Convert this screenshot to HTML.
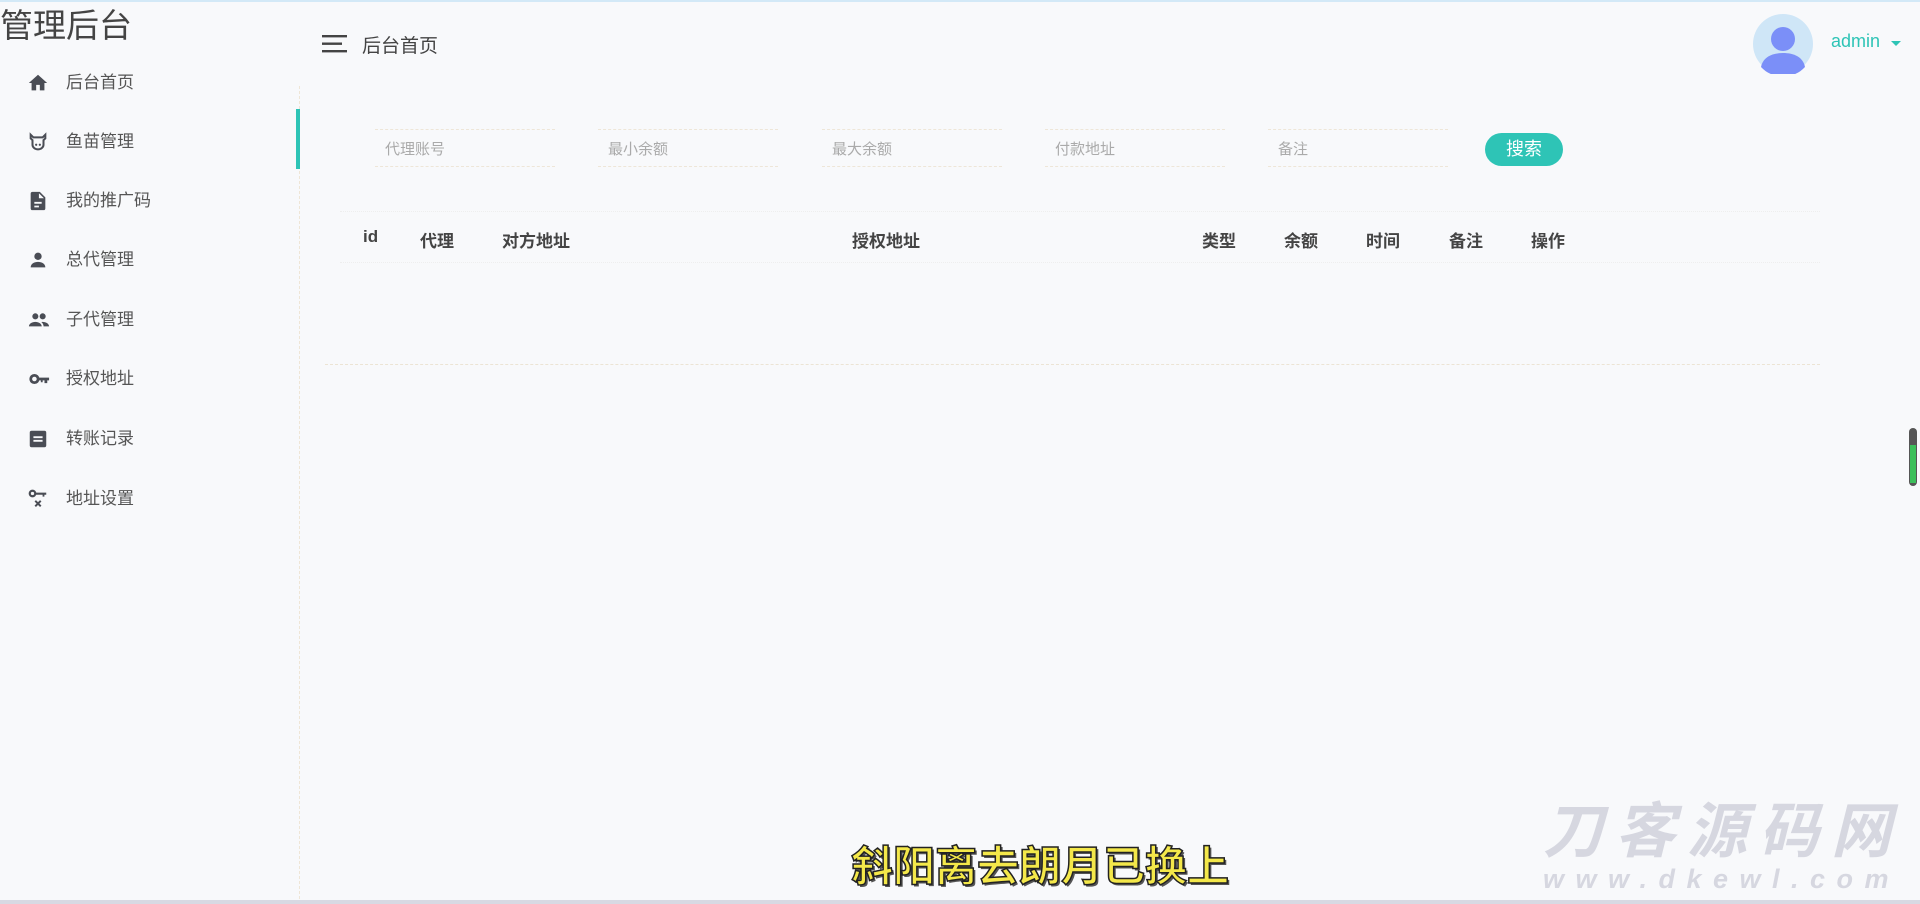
<!DOCTYPE html>
<html><head><meta charset="utf-8"><style>
*{margin:0;padding:0;box-sizing:border-box}
body{width:1920px;height:904px;background:#f8f9fb;font-family:"Liberation Sans","Noto Sans CJK SC",sans-serif;position:relative;overflow:hidden;color:#555}
.a{position:absolute;white-space:nowrap}
.top{left:0;top:0;width:1920px;height:2px;background:#d3e9f7}
.title{left:0;top:6px;font-size:33px;color:#444;line-height:40px}
.mi{left:0;height:30px;width:290px}
.mi svg{position:absolute;left:27px;top:4px}
.mi span{position:absolute;left:66px;top:3px;font-size:17px;color:#555;line-height:24px}
.vline{left:299px;top:86px;height:818px;border-left:1px dashed #efe6d6}
.bar{left:296px;top:109px;width:4px;height:60px;background:#2ec4b6}
.ph{font-size:15px;color:#aaa;top:138px}
.inp{top:129px;height:38px;width:180px;border-top:1px dashed #eee6d8;border-bottom:1px dashed #eee6d8}
.th{top:227px;font-size:17px;font-weight:bold;color:#444}
</style></head><body>
<div class="a top"></div>
<div class="a title">管理后台</div>
<div class="a vline"></div><div class="a bar"></div>

<div class="a mi" style="top:68px"><svg width="22" height="22" viewBox="0 0 24 24"><path d="M10 20v-6h4v6h5v-8h3L12 3 2 12h3v8z" fill="#4a4d55"/></svg><span>后台首页</span></div>
<div class="a mi" style="top:127px"><svg width="22" height="22" viewBox="0 0 24 24"><path d="M4 4l3 3h10l3-3v4l-2 2v5a6 5 0 0 1-12 0v-5l-2-2z" fill="none" stroke="#4a4d55" stroke-width="2.2"/><circle cx="10" cy="15" r="1.2" fill="#4a4d55"/><circle cx="14" cy="15" r="1.2" fill="#4a4d55"/></svg><span>鱼苗管理</span></div>
<div class="a mi" style="top:186px"><svg width="22" height="22" viewBox="0 0 24 24"><path d="M6 2h8l6 6v12a2 2 0 0 1-2 2H6a2 2 0 0 1-2-2V4a2 2 0 0 1 2-2zm7 1.5V9h5.5zM8 13v2h8v-2zm0 4v2h5v-2z" fill="#4a4d55"/></svg><span>我的推广码</span></div>
<div class="a mi" style="top:245px"><svg width="22" height="22" viewBox="0 0 24 24"><circle cx="12" cy="8" r="4" fill="#4a4d55"/><path d="M4 20c0-4 4-6 8-6s8 2 8 6z" fill="#4a4d55"/></svg><span>总代管理</span></div>
<div class="a mi" style="top:305px"><svg width="24" height="22" viewBox="0 0 24 24"><circle cx="8" cy="8" r="3.3" fill="#4a4d55"/><circle cx="16" cy="8" r="3.3" fill="#4a4d55"/><path d="M1 19c0-3 3.5-5 7-5s7 2 7 5zM16 14c3.5 0 7 2 7 5h-6c0-2-1-3.5-2.5-4.8z" fill="#4a4d55"/></svg><span>子代管理</span></div>
<div class="a mi" style="top:364px"><svg width="24" height="22" viewBox="0 0 24 24"><circle cx="7" cy="12" r="4" fill="none" stroke="#4a4d55" stroke-width="3"/><path d="M11 10.5h12v3h-2v3h-3v-3h-2v2h-2v-2h-3z" fill="#4a4d55"/></svg><span>授权地址</span></div>
<div class="a mi" style="top:424px"><svg width="22" height="22" viewBox="0 0 24 24"><path d="M5 3h14a2 2 0 0 1 2 2v14a2 2 0 0 1-2 2H5a2 2 0 0 1-2-2V5a2 2 0 0 1 2-2zm2 6v2h10V9zm0 4v2h10v-2z" fill="#4a4d55"/></svg><span>转账记录</span></div>
<div class="a mi" style="top:484px"><svg width="22" height="22" viewBox="0 0 24 24"><circle cx="6" cy="6" r="3" fill="none" stroke="#4a4d55" stroke-width="2.4"/><path d="M9 5h12v2.4h-2v2h-2v-2H9z" fill="#4a4d55"/><path d="M9 14l6 6M15 14l-6 6" stroke="#4a4d55" stroke-width="2.2"/></svg><span>地址设置</span></div>

<svg class="a" style="left:322px;top:35px" width="25" height="18"><rect y="0" width="25" height="2.4" fill="#444"/><rect y="7.5" width="20" height="2.4" fill="#444"/><rect y="15" width="25" height="2.4" fill="#444"/></svg>
<div class="a" style="left:362px;top:31px;font-size:19px;color:#444">后台首页</div>

<svg class="a" style="left:1753px;top:14px" width="60" height="60" viewBox="0 0 60 60"><circle cx="30" cy="30" r="30" fill="#cfe6f7"/><circle cx="30" cy="25" r="12" fill="#7b8ff8"/><path d="M8 53c2-10 11-14 22-14s20 4 22 14a30 30 0 0 1-44 0z" fill="#7b8ff8"/></svg>
<div class="a" style="left:1831px;top:31px;font-size:18px;color:#2ec4b6">admin</div>
<div class="a" style="left:1891px;top:41px;border-left:5px solid transparent;border-right:5px solid transparent;border-top:5px solid #2ec4b6"></div>

<div class="a inp" style="left:375px"></div><div class="a ph" style="left:385px">代理账号</div>
<div class="a inp" style="left:598px"></div><div class="a ph" style="left:608px">最小余额</div>
<div class="a inp" style="left:822px"></div><div class="a ph" style="left:832px">最大余额</div>
<div class="a inp" style="left:1045px"></div><div class="a ph" style="left:1055px">付款地址</div>
<div class="a inp" style="left:1268px"></div><div class="a ph" style="left:1278px">备注</div>
<div class="a" style="left:1485px;top:133px;width:78px;height:33px;border-radius:17px;background:#2ec4b6;color:#fff;font-size:18px;text-align:center;line-height:33px">搜索</div>

<div class="a" style="left:340px;top:211px;width:1480px;border-top:1px dotted #eee"></div>
<div class="a th" style="left:363px">id</div>
<div class="a th" style="left:420px">代理</div>
<div class="a th" style="left:502px">对方地址</div>
<div class="a th" style="left:852px">授权地址</div>
<div class="a th" style="left:1202px">类型</div>
<div class="a th" style="left:1284px">余额</div>
<div class="a th" style="left:1366px">时间</div>
<div class="a th" style="left:1449px">备注</div>
<div class="a th" style="left:1531px">操作</div>
<div class="a" style="left:340px;top:262px;width:1480px;border-top:1px dotted #eee"></div>
<div class="a" style="left:325px;top:364px;width:1495px;border-top:1px dashed #ece4d4"></div>

<div class="a" style="left:1909px;top:428px;width:8px;height:58px;border-radius:4px;background:#555"></div>
<div class="a" style="left:1910px;top:445px;width:6px;height:38px;background:#3bbf5a"></div>

<div class="a" style="left:851px;top:833px;font-size:42px;color:#f4e84a;font-weight:bold;-webkit-text-stroke:1.5px #222;text-shadow:2px 2px 0 #555">斜阳离去朗月已换上</div>
<div class="a" style="left:1543px;top:800px;font-size:60px;line-height:64px;font-weight:bold;font-style:italic;color:#d6d7e0;letter-spacing:12px">刀客源码网</div>
<div class="a" style="left:1543px;top:864px;font-size:27px;line-height:30px;font-weight:bold;font-style:italic;color:#d6d7e0;letter-spacing:11.5px">www.dkewl.com</div>
<div class="a" style="left:0;top:900px;width:1920px;height:4px;background:#d8d9e3"></div>
</body></html>
